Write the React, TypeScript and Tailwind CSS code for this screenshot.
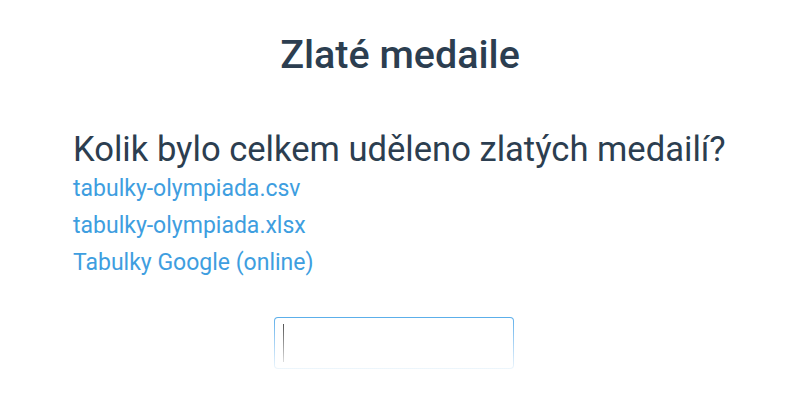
export default function App() {
  return (
    <div className="min-h-[400px] bg-white font-['Roboto',sans-serif] text-[#2c3e50]">
      <div className="mx-auto w-[654px] pt-[32px]">
        <h1 className="text-center text-[39.5px] font-medium leading-[46px]">Zlaté medaile</h1>
        <h2 className="mt-[50px] whitespace-nowrap text-[34.6px] font-normal leading-[42px]">
          Kolik bylo celkem uděleno zlatých medailí?
        </h2>
        <div className="flex flex-col text-[23px] leading-[37px] text-[#3e9ee0]">
          <a href="#">tabulky-olympiada.csv</a>
          <a href="#">tabulky-olympiada.xlsx</a>
          <a href="#">Tabulky Google (online)</a>
        </div>
        <div className="mt-[35.5px] flex justify-center">
          <div className="mr-[12px] h-[52px] w-[240px] rounded-[4px] bg-gradient-to-b from-[#5aaeea] to-[#eef6fc] p-px">
            <div className="flex h-full w-full items-center rounded-[3px] bg-white pl-[8px]">
              <div className="h-[38px] w-px bg-gradient-to-b from-[#555] to-[#ddd]" />
            </div>
          </div>
        </div>
      </div>
    </div>
  );
}
